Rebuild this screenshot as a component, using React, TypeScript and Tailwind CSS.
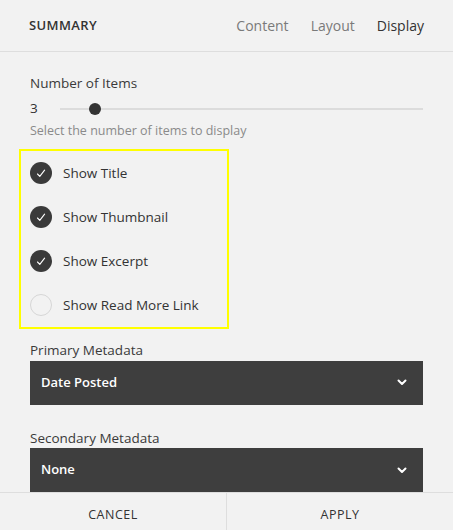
import React from 'react';

const options = [
  { label: 'Show Title', checked: true },
  { label: 'Show Thumbnail', checked: true },
  { label: 'Show Excerpt', checked: true },
  { label: 'Show Read More Link', checked: false },
];

const Chevron = () => (
  <svg width="10" height="7" viewBox="0 0 10 7" fill="none">
    <path d="M1.5 1.5L5 5L8.5 1.5" stroke="white" strokeWidth="2" strokeLinecap="round" strokeLinejoin="round" />
  </svg>
);

const Select: React.FC<{ label: string; value: string }> = ({ label, value }) => (
  <div className="flex flex-col">
    <span className="text-[13.5px] text-[#3a3a3a] leading-none mb-[3px]">{label}</span>
    <div className="h-[44px] bg-[#3e3e3e] flex items-center justify-between pl-[11px] pr-[16px] shrink-0">
      <span className="text-[13px] font-semibold text-white">{value}</span>
      <Chevron />
    </div>
  </div>
);

const App: React.FC = () => {
  return (
    <div className="w-[453px] h-[530px] bg-[#f2f2f2] flex flex-col overflow-hidden font-['Open_Sans',sans-serif] text-[#333]">
      {/* Header */}
      <div className="h-[52px] shrink-0 border-b border-[#dedede] flex items-center justify-between px-[29px]">
        <span className="text-[13px] font-semibold tracking-[0.03em] text-[#333]">SUMMARY</span>
        <div className="flex items-center gap-[22px] text-[14px]">
          <span className="text-[#7a7a7a]">Content</span>
          <span className="text-[#7a7a7a]">Layout</span>
          <span className="text-[#333]">Display</span>
        </div>
      </div>

      {/* Body */}
      <div className="flex-1 overflow-hidden px-[30px] pt-[25px]">
        <div className="text-[13.5px] text-[#3a3a3a] leading-none">Number of Items</div>
        <div className="flex items-center mt-[11px] h-[14px]">
          <span className="text-[13.5px] w-[30px]">3</span>
          <div className="relative flex-1 h-[2px] bg-[#dcdcdc]">
            <div className="absolute top-1/2 left-[29px] w-[12px] h-[12px] -mt-[6px] rounded-full bg-[#333]" />
          </div>
        </div>
        <div className="text-[12.5px] text-[#8a8a8a] mt-[9px] leading-none">Select the number of items to display</div>

        <div className="mt-[12px] -ml-[11px] w-[210px] h-[180px] border-2 border-[#ffff00] flex flex-col pl-[9px]">
          {options.map((o) => (
            <div key={o.label} className="flex items-center h-[44px] shrink-0">
              {o.checked ? (
                <div className="w-[22px] h-[22px] rounded-full bg-[#3a3a3a] flex items-center justify-center">
                  <svg width="10" height="9" viewBox="0 0 10 9" fill="none">
                    <path d="M1.5 5L3.8 7.4L8.6 1.2" stroke="white" strokeWidth="1.1" strokeLinecap="round" strokeLinejoin="round" />
                  </svg>
                </div>
              ) : (
                <div className="w-[22px] h-[22px] rounded-full border border-[#d6d6d6]" />
              )}
              <span className="ml-[11px] text-[13.5px] text-[#333]">{o.label}</span>
            </div>
          ))}
        </div>

        <div className="mt-[15px] flex flex-col gap-[27px]">
          <Select label="Primary Metadata" value="Date Posted" />
          <Select label="Secondary Metadata" value="None" />
        </div>
      </div>

      {/* Footer */}
      <div className="h-[38px] shrink-0 border-t border-[#dedede] flex pt-[8px] text-[12.5px] tracking-[0.04em] text-[#333]">
        <div className="w-[227px] -mt-[8px] pt-[8px] border-r border-[#dedede] flex items-center justify-center">CANCEL</div>
        <div className="flex-1 flex items-center justify-center">APPLY</div>
      </div>
    </div>
  );
};

export default App;
